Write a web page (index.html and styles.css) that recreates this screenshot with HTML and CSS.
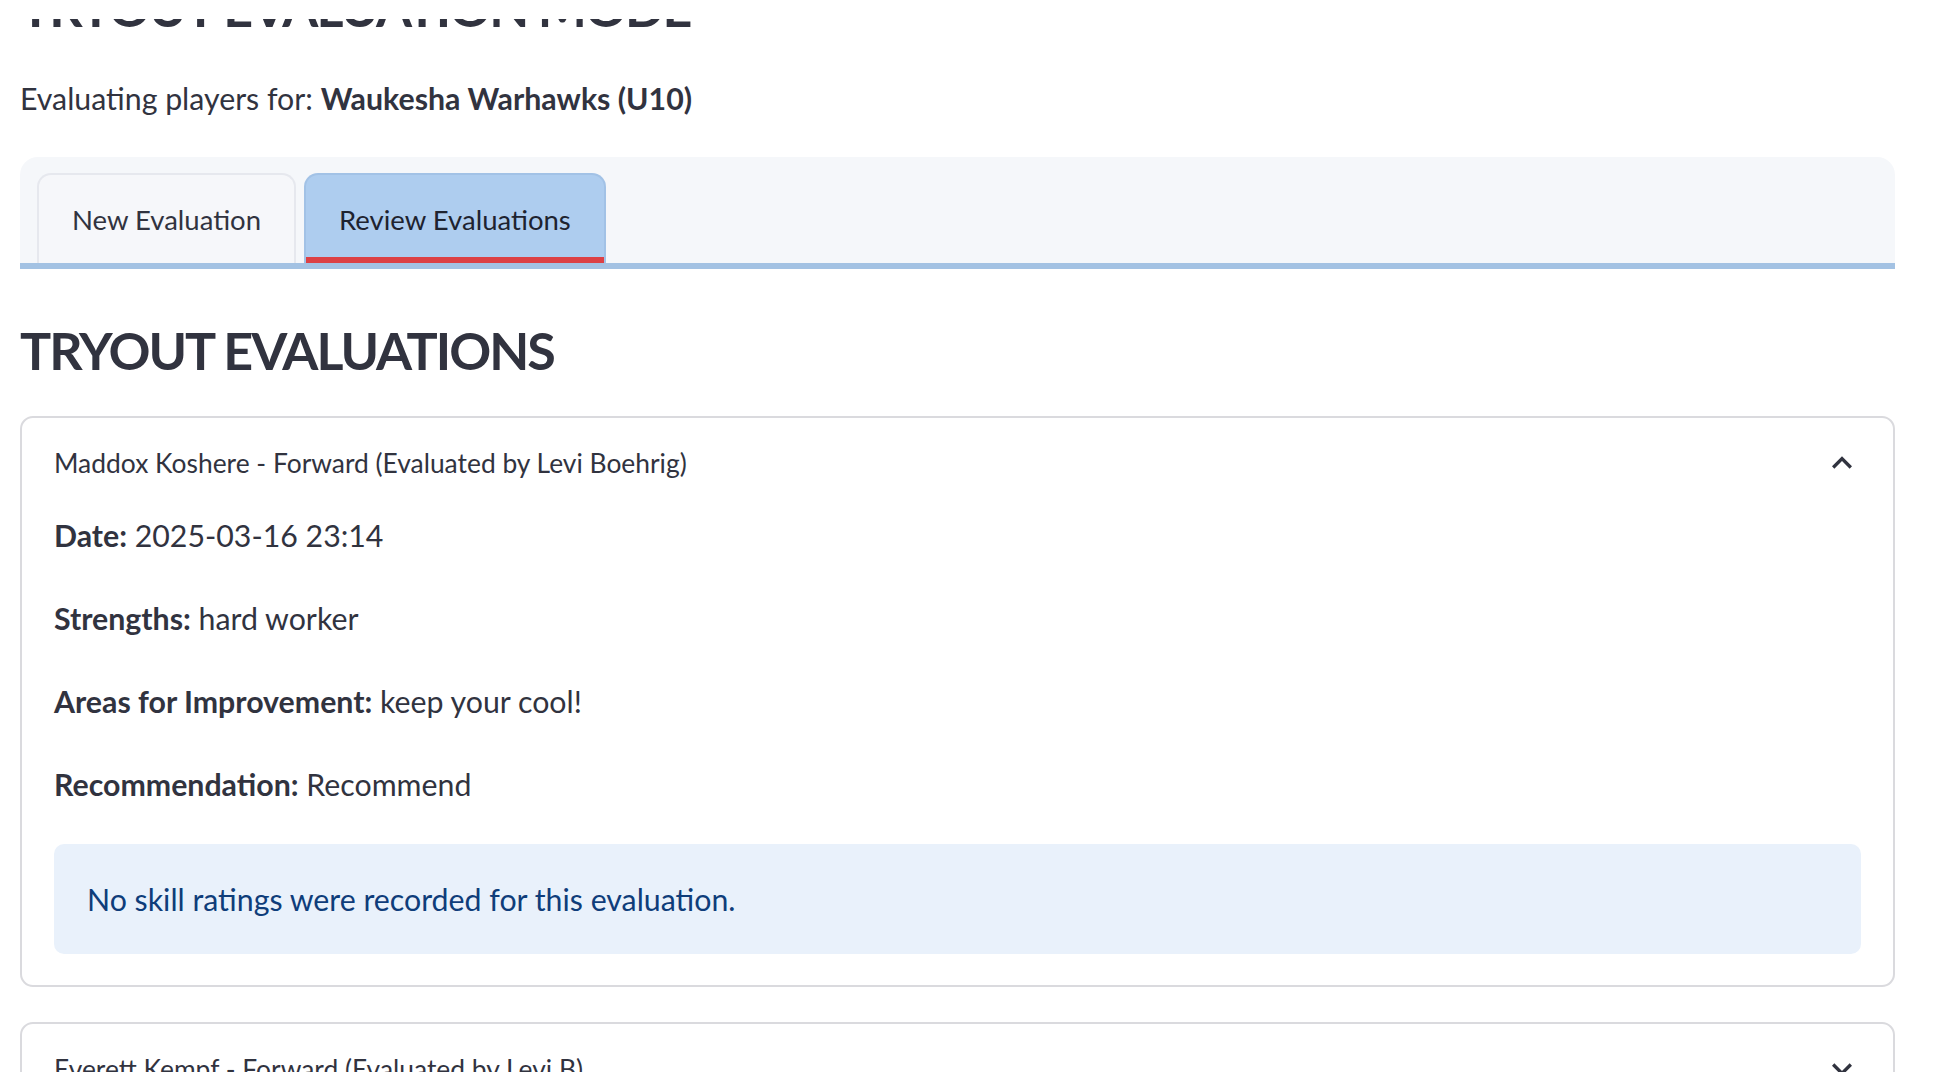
FILE: index.html
```html
<!DOCTYPE html>
<html lang="en">
<head>
<meta charset="utf-8">
<title>Tryout Evaluation Mode</title>
<link rel="stylesheet" href="styles.css">
</head>
<body>
<header class="app-header"></header>
<main class="main">
  <h1 class="title">TRYOUT EVALUATION MODE</h1>
  <p class="lead">Evaluating players for: <strong>Waukesha Warhawks (U10)</strong></p>

  <div class="tabs">
    <div class="tab-list">
      <div class="tab">New Evaluation</div>
      <div class="tab tab-active">Review Evaluations</div>
    </div>
  </div>

  <h2 class="section-title">TRYOUT EVALUATIONS</h2>

  <div class="expanders">
    <section class="expander">
      <div class="exp-summary">
        <span class="exp-label">Maddox Koshere - Forward (Evaluated by Levi Boehrig)</span>
        <svg class="chev" viewBox="0 0 24 24"><path d="M12 8l-6 6 1.41 1.41L12 10.83l4.59 4.58L18 14z"/></svg>
      </div>
      <div class="exp-body">
        <p class="row"><strong>Date:</strong> 2025-03-16 23:14</p>
        <p class="row"><strong>Strengths:</strong> hard worker</p>
        <p class="row"><strong>Areas for Improvement:</strong> keep your cool!</p>
        <p class="row"><strong>Recommendation:</strong> Recommend</p>
        <div class="info">No skill ratings were recorded for this evaluation.</div>
      </div>
    </section>

    <section class="expander">
      <div class="exp-summary">
        <span class="exp-label">Everett Kempf - Forward (Evaluated by Levi B)</span>
        <svg class="chev" viewBox="0 0 24 24"><path d="M16.59 8.59L12 13.17 7.41 8.59 6 10l6 6 6-6z"/></svg>
      </div>
    </section>
  </div>
</main>
</body>
</html>
```

FILE: styles.css
```css
* { box-sizing: border-box; }

html, body {
  margin: 0;
  padding: 0;
  background: #ffffff;
  overflow: hidden;
}

body {
  font-family: Lato, "Open Sans", "Liberation Sans", sans-serif;
  color: #31333f;
}

.app-header {
  position: fixed;
  top: 0;
  left: 0;
  right: 0;
  height: 19px;
  background: #ffffff;
  z-index: 10;
}

.main {
  padding: 0 47px 0 20px;
  display: flex;
  flex-direction: column;
}

.title {
  margin: -24px 0 0 0;
  font-size: 52px;
  line-height: 1.2;
  font-weight: 700;
  letter-spacing: -2px;
  color: #31333f;
}

.lead {
  margin: 38px 0 0 0;
  font-size: 30.3px;
  line-height: 45px;
}

.lead strong { font-weight: 700; }

.tabs {
  margin-top: 36px;
  background: #f5f7fa;
  border-radius: 18px 18px 0 0;
  border-bottom: 6px solid #a3c2e3;
  padding: 16px 17px 0 17px;
}

.tab-list {
  display: flex;
  gap: 8px;
}

.tab {
  height: 90px;
  padding: 0 33px;
  display: flex;
  align-items: center;
  font-size: 27.5px;
  color: #31333f;
  background: #f6f7fa;
  border: 2px solid #e6e8ee;
  border-bottom: none;
  border-radius: 14px 14px 0 0;
}

.tab-active {
  background: #aecdef;
  border-color: #a2c2e6;
  color: #1e2330;
  box-shadow: inset 0 -6px 0 #dc4145;
}

.section-title {
  margin: 50px 0 0 0;
  font-size: 52px;
  line-height: 1.2;
  font-weight: 700;
  letter-spacing: -2px;
  color: #31333f;
}

.expanders {
  margin-top: 34px;
  display: flex;
  flex-direction: column;
  gap: 35px;
}

.expander {
  border: 2px solid #dadade;
  border-radius: 13px;
  background: #ffffff;
}

.exp-summary {
  height: 90px;
  padding: 0 31px 0 32px;
  display: flex;
  align-items: center;
  justify-content: space-between;
}

.exp-label {
  font-size: 26.4px;
  color: #31333f;
}

.chev {
  width: 40px;
  height: 40px;
  fill: #31333f;
}

.exp-body {
  padding: 4px 32px 31px 32px;
  display: flex;
  flex-direction: column;
  gap: 37px;
}

.row {
  margin: 0;
  font-size: 30.3px;
  line-height: 46px;
}

.row strong { font-weight: 700; }

.info {
  background: #e9f1fb;
  border-radius: 10px;
  padding: 32px 33px;
  font-size: 30.3px;
  line-height: 46px;
  color: #0f3d7a;
}
```
